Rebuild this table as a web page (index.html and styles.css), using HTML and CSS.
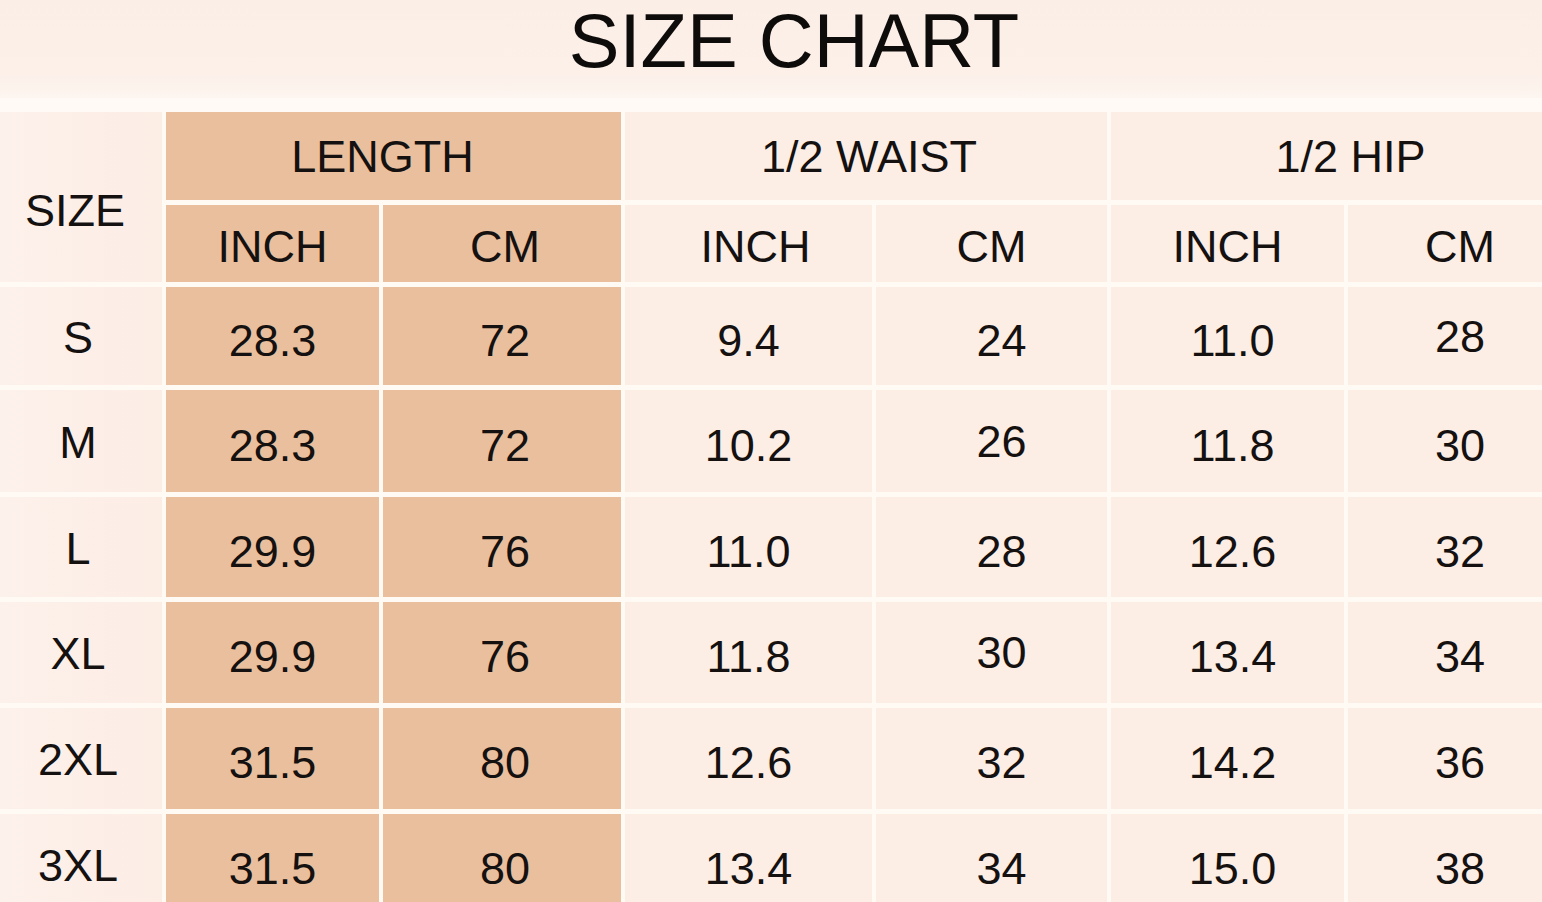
FILE: index.html
```html
<!DOCTYPE html>
<html lang="en">
<head>
<meta charset="utf-8">
<title>Size Chart</title>
<link rel="stylesheet" href="styles.css">
</head>
<body>
<div class="page">
  <header class="title-band"><h1 class="title">SIZE CHART</h1></header>
  <div class="chart">
    <div class="cell size-head">SIZE</div>
    <div class="cell group hl g-length">LENGTH</div>
    <div class="cell group g-waist">1/2 WAIST</div>
    <div class="cell group g-hip">1/2 HIP</div>

    <div class="cell sub hl">INCH</div>
    <div class="cell sub hl c-lcm">CM</div>
    <div class="cell sub c-winch">INCH</div>
    <div class="cell sub">CM</div>
    <div class="cell sub">INCH</div>
    <div class="cell sub c-hcm">CM</div>

    <div class="cell sz">S</div>
    <div class="cell val hl">28.3</div>
    <div class="cell val hl c-lcm">72</div>
    <div class="cell val">9.4</div>
    <div class="cell val c-wcm">24</div>
    <div class="cell val c-hinch">11.0</div>
    <div class="cell val c-hcm up">28</div>

    <div class="cell sz">M</div>
    <div class="cell val hl">28.3</div>
    <div class="cell val hl c-lcm">72</div>
    <div class="cell val">10.2</div>
    <div class="cell val c-wcm up">26</div>
    <div class="cell val c-hinch">11.8</div>
    <div class="cell val c-hcm">30</div>

    <div class="cell sz">L</div>
    <div class="cell val hl">29.9</div>
    <div class="cell val hl c-lcm">76</div>
    <div class="cell val">11.0</div>
    <div class="cell val c-wcm">28</div>
    <div class="cell val c-hinch">12.6</div>
    <div class="cell val c-hcm">32</div>

    <div class="cell sz">XL</div>
    <div class="cell val hl">29.9</div>
    <div class="cell val hl c-lcm">76</div>
    <div class="cell val">11.8</div>
    <div class="cell val c-wcm up">30</div>
    <div class="cell val c-hinch">13.4</div>
    <div class="cell val c-hcm">34</div>

    <div class="cell sz">2XL</div>
    <div class="cell val hl">31.5</div>
    <div class="cell val hl c-lcm">80</div>
    <div class="cell val">12.6</div>
    <div class="cell val c-wcm">32</div>
    <div class="cell val c-hinch">14.2</div>
    <div class="cell val c-hcm">36</div>

    <div class="cell sz">3XL</div>
    <div class="cell val hl">31.5</div>
    <div class="cell val hl c-lcm">80</div>
    <div class="cell val">13.4</div>
    <div class="cell val c-wcm">34</div>
    <div class="cell val c-hinch">15.0</div>
    <div class="cell val c-hcm">38</div>
  </div>
</div>
</body>
</html>
```
FILE: styles.css
```css
html, body {
  margin: 0;
  padding: 0;
  background: #fffaf6;
}
body {
  width: 1542px;
  height: 902px;
  overflow: hidden;
  font-family: "Liberation Sans", Arial, sans-serif;
  color: #141110;
}
.page {
  display: flex;
  flex-direction: column;
}
.title-band {
  height: 98px;
  box-sizing: border-box;
  padding-top: 3px;
  background: linear-gradient(180deg, #fbeee6 0%, #fcf0e9 75%, #fdf5f0 100%);
  display: flex;
  justify-content: center;
  margin-bottom: 14px;
}
.title {
  margin: 0;
  font-weight: 400;
  font-size: 76px;
  line-height: 1;
  color: #0e0c0b;
  padding-left: 46px;
}
.chart {
  display: grid;
  grid-template-columns: 162px 213px 238px 247px 231px 233px 1fr;
  grid-template-rows: 88px 77px 98px 102px 100px 101px 101px 100px;
  column-gap: 4px;
  row-gap: 5px;
  background: #fffaf4;
}
.cell {
  background: #fcede5;
  display: flex;
  align-items: center;
  justify-content: center;
  font-size: 45px;
  line-height: 1;
  box-sizing: border-box;
}
.hl {
  background: #eabf9d;
}
.size-head {
  grid-row: span 2;
  background: linear-gradient(90deg, #fdf1eb 0%, #fcede5 100%);
  padding-right: 12px;
  padding-top: 26px;
}
.sz {
  background: linear-gradient(90deg, #fdf1eb 0%, #fcede5 100%);
  padding-right: 6px;
  padding-top: 2px;
}
.group {
  grid-column: span 2;
  font-size: 45px;
}
.g-length { padding-right: 22px; }
.g-waist { padding-left: 6px; }
.g-hip { padding-left: 48px; }
.sub {
  padding-top: 6px;
}
.val {
  padding-top: 8px;
}
.val.up {
  padding-top: 0;
}
.c-lcm { padding-left: 6px; }
.c-winch { padding-left: 14px; }
.c-wcm { padding-left: 20px; }
.c-hinch { padding-left: 10px; }
.c-hcm { padding-left: 30px; }
```
